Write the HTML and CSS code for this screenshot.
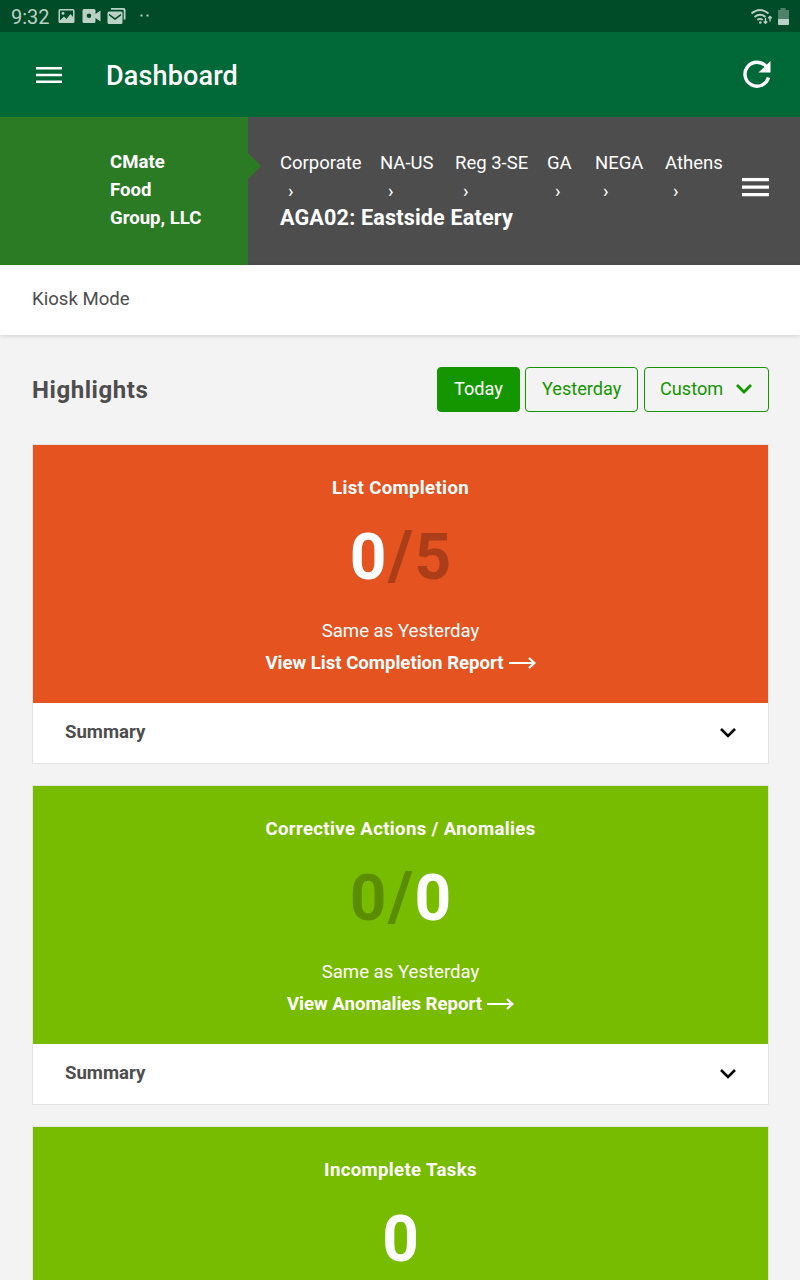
FILE: index.html
```html
<!DOCTYPE html>
<html lang="en">
  <head>
    <meta charset="UTF-8" />
    <meta name="viewport" content="width=device-width, initial-scale=1.0" />
    <title>Dashboard</title>
    <link rel="stylesheet" href="styles.css">
  </head>
  <body>
    <div class="screen">
      <div class="status-bar">
        <span class="clock">9:32</span>
        <svg class="status-icons" width="92" height="20" viewBox="0 0 92 20">
          <path fill-rule="evenodd" d="M2 2h13q1.500 0 1.500 1.500v11q0 1.500-1.500 1.500h-13q-1.500 0-1.500-1.500v-11q0-1.500 1.500-1.500zM2 3.500v10l4-4 2.500 2.500 4-5 2.500 3v-6.500zM5 4.700a1.500 1.500 0 1 1 0 3 1.500 1.500 0 0 1 0-3z"/>
          <path fill-rule="evenodd" d="M26 2h10q1.500 0 1.500 1.500v3.500l5-3.500v11l-5-3.500v3.500q0 1.500-1.500 1.500h-10q-1.500 0-1.500-1.500v-11q0-1.500 1.500-1.500zM31 6.500a2.300 2.300 0 1 0 0 4.600 2.300 2.300 0 0 0 0-4.600z"/>
          <path d="M53 1h12.500q2 0 2 2v9.500h-1.800v-8.500q0-1.200-1.200-1.200h-11.500z"/>
          <path fill-rule="evenodd" d="M51 4.500h12q1.500 0 1.500 1.500v9.500q0 1.500-1.500 1.500h-12q-1.500 0-1.500-1.500v-9.500q0-1.500 1.500-1.500zM51 6.800v1.700l6 4.500 6-4.500v-1.700l-6 4.300z"/>
          <path d="M82.500 7.500h2v2h-2zM88.500 7.500h2v2h-2z"/>
        </svg>
        <svg class="signal-icons" width="40" height="20" viewBox="0 0 40 20">
          <g fill="none" stroke="#b9d2c5" stroke-width="1.800">
            <path d="M1.500 5.500q8.500-7 17 0M4.500 9q5.500-4.500 11 0M7.300 12q2.700-2.300 5.400 0"/>
            <path d="M15.500 10v5M13.700 13.400l1.800 1.900 1.800-1.900M20 13.500v-5M18.200 10.300l1.800-1.900 1.800 1.900" stroke-width="1.400"/>
          </g>
          <circle cx="10.300" cy="14.500" r="1.300"/>
          <path class="faded" d="M30.500 0h5v2h3.500v9h-11v-9h2.500z"/>
          <path class="charge" d="M28 11h11v5q0 1-1 1h-9q-1 0-1-1z"/>
        </svg>
      </div>

      <div class="app-bar">
        <svg class="menu-icon" width="26" height="18" viewBox="0 0 26 18">
          <path d="M0 1h26v2.600h-26zM0 7.700h26v2.600h-26zM0 14.400h26v2.600h-26z" fill="#fff"/>
        </svg>
        <h1 class="page-title">Dashboard</h1>
        <svg class="refresh-icon" width="28" height="28" viewBox="0 0 28 28">
          <path d="M23.300 6.600a12 12 0 1 0 2.200 11" fill="none" stroke="#fff" stroke-width="3.400"/>
          <path d="M27.500 1v11.500h-12z" fill="#fff"/>
        </svg>
      </div>

      <div class="location">
        <div class="company">
          <span class="company-name">CMate<br>Food<br>Group, LLC</span>
        </div>
        <div class="location-path">
          <ul class="breadcrumb">
            <li>Corporate<span>›</span></li>
            <li>NA-US<span>›</span></li>
            <li>Reg 3-SE<span>›</span></li>
            <li>GA<span>›</span></li>
            <li>NEGA<span>›</span></li>
            <li>Athens<span>›</span></li>
          </ul>
          <div class="store">AGA02: Eastside Eatery</div>
        </div>
        <svg class="location-menu" width="27" height="20" viewBox="0 0 27 20">
          <path d="M0 1h27v3.200h-27zM0 8.500h27v3.200h-27zM0 16h27v3.200h-27z" fill="#fff"/>
        </svg>
      </div>

      <div class="kiosk">Kiosk Mode</div>

      <div class="content">
        <div class="toolbar">
          <h2 class="section-title">Highlights</h2>
          <div class="filters">
            <button class="btn btn-today active">Today</button>
            <button class="btn btn-yesterday">Yesterday</button>
            <button class="btn btn-custom">Custom
              <svg width="18" height="12" viewBox="0 0 18 12"><path d="M2 2l7 7 7-7" fill="none" stroke="#149600" stroke-width="2.800"/></svg>
            </button>
          </div>
        </div>

        <div class="card">
          <div class="card-main orange">
            <div class="card-title">List Completion</div>
            <div class="count">0<span class="dim"><span class="slash">/</span>5</span></div>
            <div class="trend">Same as Yesterday</div>
            <div class="report">View List Completion Report
              <svg width="27" height="12" viewBox="0 0 27 12"><path d="M0 6h25.500M20 1l5.500 5-5.500 5" fill="none" stroke="#fff" stroke-width="2.200"/></svg>
            </div>
          </div>
          <div class="summary">Summary
            <svg width="18" height="12" viewBox="0 0 18 12"><path d="M2 2l7 7 7-7" fill="none" stroke="#000" stroke-width="2.600"/></svg>
          </div>
        </div>

        <div class="card">
          <div class="card-main green">
            <div class="card-title">Corrective Actions / Anomalies</div>
            <div class="count"><span class="dim">0<span class="slash">/</span></span>0</div>
            <div class="trend">Same as Yesterday</div>
            <div class="report">View Anomalies Report
              <svg width="27" height="12" viewBox="0 0 27 12"><path d="M0 6h25.500M20 1l5.500 5-5.500 5" fill="none" stroke="#fff" stroke-width="2.200"/></svg>
            </div>
          </div>
          <div class="summary">Summary
            <svg width="18" height="12" viewBox="0 0 18 12"><path d="M2 2l7 7 7-7" fill="none" stroke="#000" stroke-width="2.600"/></svg>
          </div>
        </div>

        <div class="card">
          <div class="card-main green">
            <div class="card-title">Incomplete Tasks</div>
            <div class="count">0</div>
          </div>
        </div>
      </div>
    </div>
  </body>
</html>
```
FILE: styles.css
```css
* {
  box-sizing: border-box;
}

body {
  font-family: Roboto, "Liberation Sans", sans-serif;
  font-size: 18.600px;
  margin: 0;
  background-color: #f3f3f3;
  color: #4d4d4d;
}

.screen {
  height: 1280px;
  overflow: hidden;
}

svg {
  display: block;
  flex: none;
}

.status-bar {
  display: flex;
  align-items: center;
  height: 32px;
  padding: 0 10px 0 11px;
  background-color: #004b28;
  color: #b9d2c5;
}

.clock {
  width: 47px;
  font-size: 20px;
  line-height: 32px;
  padding-top: 2px;
}

.status-icons,
.signal-icons {
  fill: #b9d2c5;
}

.status-icons {
  margin-top: 2px;
}

.signal-icons {
  margin: 3px 0 0 auto;
}

.signal-icons .faded {
  fill: #4f8268;
}

.app-bar {
  display: flex;
  align-items: center;
  height: 85px;
  padding: 0 29px 0 36px;
  background-color: #006937;
  color: #fff;
}

.page-title {
  margin: 2px 0 0 44px;
  font-size: 27px;
  font-weight: 500;
  letter-spacing: 0.150px;
}

.refresh-icon {
  margin: 0 0 2px auto;
}

.location {
  display: flex;
  height: 148px;
  background-color: #4d4d4d;
  color: #fff;
}

.company {
  position: relative;
  width: 248px;
  padding: 31px 0 0 110px;
  background-color: #2a7b24;
  font-weight: 700;
  line-height: 28px;
}

.company::after {
  content: "";
  position: absolute;
  left: 248px;
  top: 36px;
  border: 13px solid transparent;
  border-left-color: #2a7b24;
  border-right: 0;
}

.location-path {
  width: 494px;
  padding: 32px 0 0 32px;
}

.breadcrumb {
  display: grid;
  grid-template-columns: 100px 75px 92px 48px 70px 58px;
  margin: 0;
  padding: 0;
  list-style: none;
  font-size: 18.500px;
  line-height: 28px;
  white-space: nowrap;
}

.breadcrumb span {
  display: block;
  padding-left: 8px;
}

.store {
  font-size: 21.600px;
  font-weight: 700;
  line-height: 26px;
  letter-spacing: 0.160px;
}

.location-menu {
  margin-top: 60px;
}

.kiosk {
  height: 70px;
  padding-left: 32px;
  background-color: #fff;
  line-height: 68px;
  box-shadow: 0 1px 4px rgba(0, 0, 0, 0.15);
}

.content {
  padding: 32px 31px 0 32px;
}

.toolbar {
  display: flex;
  justify-content: space-between;
  align-items: center;
  height: 45px;
  margin-bottom: 32px;
}

.section-title {
  margin: 0;
  font-size: 24px;
  font-weight: 700;
  letter-spacing: 0.550px;
}

.filters {
  display: flex;
}

.btn {
  display: flex;
  align-items: center;
  height: 45px;
  padding: 0 16px 2px;
  border: 1px solid #149600;
  border-radius: 4px;
  background-color: transparent;
  color: #149600;
  font-family: inherit;
  font-size: 18.150px;
}

.btn.active {
  background-color: #149600;
  color: #fff;
}

.btn-today {
  width: 83px;
}

.btn-yesterday {
  width: 113px;
  margin: 0 6px 0 5px;
}

.btn-custom {
  width: 125px;
  justify-content: space-between;
  padding: 0 15px 2px;
}

.card {
  margin-bottom: 21px;
  border: 1px solid #e3e3e3;
  background-color: #fff;
}

.card-main {
  height: 258px;
  padding-top: 27px;
  color: #fff;
  text-align: center;
}

.orange {
  background-color: #e45320;
}

.green {
  background-color: #78bc00;
}

.card-title {
  font-weight: 700;
  line-height: 32px;
  letter-spacing: 0.350px;
}

.count {
  height: 80px;
  margin-top: 14px;
  font-size: 64px;
  font-weight: 700;
  line-height: 80px;
}

.dim {
  color: rgba(0, 0, 0, 0.25);
}

.slash {
  margin: 0 1.500px;
  font-size: 68px;
  line-height: 1;
}

.trend {
  margin-top: 17px;
  line-height: 32px;
}

.report {
  display: flex;
  justify-content: center;
  align-items: center;
  gap: 5px;
  font-weight: 700;
  line-height: 32px;
}

.summary {
  display: flex;
  justify-content: space-between;
  align-items: center;
  height: 60px;
  padding: 0 31px 3px 32px;
  font-weight: 700;
}

.summary svg {
  margin-top: 3px;
}
```
